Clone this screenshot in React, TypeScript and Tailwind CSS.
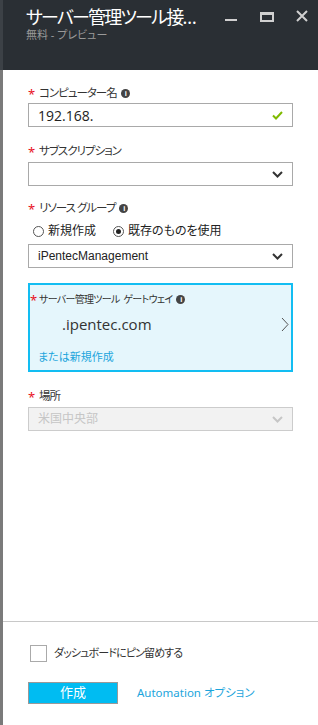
import React from "react";

const font = "[font-family:'Noto_Sans','Noto_Sans_CJK_JP',sans-serif] [font-feature-settings:'palt']";

function Info() {
  return (
    <span className="inline-flex w-[9px] h-[9px] rounded-full bg-[#444] text-white text-[7px] leading-none items-center justify-center font-bold ml-[4px] align-middle">
      i
    </span>
  );
}

function Chevron({ color = "#333" }: { color?: string }) {
  return (
    <svg width="11" height="7" viewBox="0 0 11 7">
      <path d="M1 1 L5.5 5.5 L10 1" stroke={color} strokeWidth="2" fill="none" />
    </svg>
  );
}

function Label({ text, info }: { text: string; info?: boolean }) {
  return (
    <div className="flex items-center h-[16px] text-[11.5px] tracking-[-1px] text-[#333]">
      <span className="text-[#e81123] w-[11px] text-[13px] leading-none mt-[2px]">*</span>
      <span>{text}</span>
      {info && <Info />}
    </div>
  );
}

export default function App() {
  return (
    <div className={`flex w-[318px] h-[725px] bg-white overflow-hidden ${font}`}>
      <div className="flex flex-col w-[3px] shrink-0">
        <div className="h-[70px] bg-[#3c4146]" />
        <div className="flex-1 bg-[#7a7a7a]" />
      </div>
      <div className="flex flex-col flex-1 min-w-0">
        <div className="h-[70px] bg-[#2a2f34] flex pl-[23px] pt-[7px] pr-[10px]">
          <div className="flex flex-col flex-1 min-w-0">
            <div className="text-white text-[18px] tracking-[-1.8px] leading-[20px] whitespace-nowrap">サーバー管理ツール接…</div>
            <div className="text-[#9a9a9a] text-[11px] leading-[12px] mt-[2px]">無料 - プレビュー</div>
          </div>
          <div className="flex items-start pt-[3px] shrink-0">
            <div className="w-[12px] h-[2px] bg-[#d0d0d0] mt-[9px]" />
            <div className="w-[14px] h-[10px] border-2 border-t-[3px] border-[#d0d0d0] ml-[23px] mt-[2px]" />
            <svg width="12" height="12" viewBox="0 0 12 12" className="ml-[22px]">
              <path d="M1 1 L11 11 M11 1 L1 11" stroke="#d0d0d0" strokeWidth="2" />
            </svg>
          </div>
        </div>
        <div className="flex flex-col flex-1 px-[25px] pt-[15px]">
          <Label text="コンピューター名" info />
          <div className="mt-[2px] h-[24px] border border-[#a9a9a9] flex items-center px-[9px] justify-between">
            <span className="text-[14px] text-[#222] [font-family:'Open_Sans',sans-serif]">192.168.</span>
            <svg width="11" height="9" viewBox="0 0 11 9">
              <path d="M1 4.5 L4 7.5 L10 1" stroke="#7fba00" strokeWidth="2" fill="none" />
            </svg>
          </div>
          <div className="mt-[16px]"><Label text="サブスクリプション" /></div>
          <div className="mt-[3px] h-[24px] border border-[#a9a9a9] flex items-center justify-end px-[9px]">
            <Chevron />
          </div>
          <div className="mt-[14px]"><Label text="リソース グループ" info /></div>
          <div className="mt-[7px] flex items-center h-[16px] text-[12px] text-[#222] pl-[5px]">
            <span className="w-[11px] h-[11px] rounded-full border border-[#555] bg-white" />
            <span className="ml-[4px]">新規作成</span>
            <span className="ml-[17px] w-[11px] h-[11px] rounded-full border border-[#555] bg-white flex items-center justify-center">
              <span className="w-[5px] h-[5px] rounded-full bg-[#222]" />
            </span>
            <span className="ml-[4px]">既存のものを使用</span>
          </div>
          <div className="mt-[5px] h-[24px] border border-[#a9a9a9] flex items-center justify-between pl-[9px] pr-[9px]">
            <span className="text-[12px] text-[#222] [font-family:'Liberation_Sans',sans-serif]">iPentecManagement</span>
            <Chevron />
          </div>
          <div className="mt-[15px] h-[89px] border-2 border-[#12bdf2] bg-[#e5f6fc] flex flex-col pt-[6px] pr-[2px]">
            <div className="flex items-center h-[16px] text-[10px] tracking-[-0.7px] text-[#333]">
              <span className="text-[#e81123] w-[9px] text-[13px] leading-none mt-[2px]">*</span>
              <span className="whitespace-pre">サーバー管理ツール  ゲートウェイ</span>
              <Info />
            </div>
            <div className="flex items-center justify-between mt-[6px] h-[22px]">
              <span className="ml-[32px] text-[15px] text-[#333] [font-family:'Open_Sans',sans-serif]">.ipentec.com</span>
              <svg width="8" height="15" viewBox="0 0 8 15">
                <path d="M1 1 L7 7.5 L1 14" stroke="#555" strokeWidth="1" fill="none" />
              </svg>
            </div>
            <div className="mt-[14px] ml-[8px] text-[11px] text-[#1ca5dc] leading-[16px]">または新規作成</div>
          </div>
          <div className="mt-[16px]"><Label text="場所" /></div>
          <div className="mt-[3px] h-[24px] border border-[#cccccc] bg-[#f2f2f2] flex items-center justify-between px-[9px]">
            <span className="text-[12px] text-[#c6c6c6]">米国中央部</span>
            <Chevron color="#c6c6c6" />
          </div>
          <div className="flex-1" />
        </div>
        <div className="h-[104px] border-t border-[#c8c8c8] flex flex-col px-[25px]">
          <div className="mt-[23px] flex items-center h-[17px]">
            <span className="ml-[2px] w-[17px] h-[17px] border border-[#aaa] bg-white" />
            <span className="ml-[7px] text-[11px] tracking-[-0.9px] text-[#333]">ダッシュボードにピン留めする</span>
          </div>
          <div className="mt-[20px] flex items-center">
            <div className="w-[90px] h-[22px] bg-[#00bcf2] border border-[#999] flex items-center justify-center text-white text-[13px]">作成</div>
            <span className="ml-[19px] text-[11.5px] text-[#1ca5dc]">Automation オプション</span>
          </div>
        </div>
      </div>
    </div>
  );
}
